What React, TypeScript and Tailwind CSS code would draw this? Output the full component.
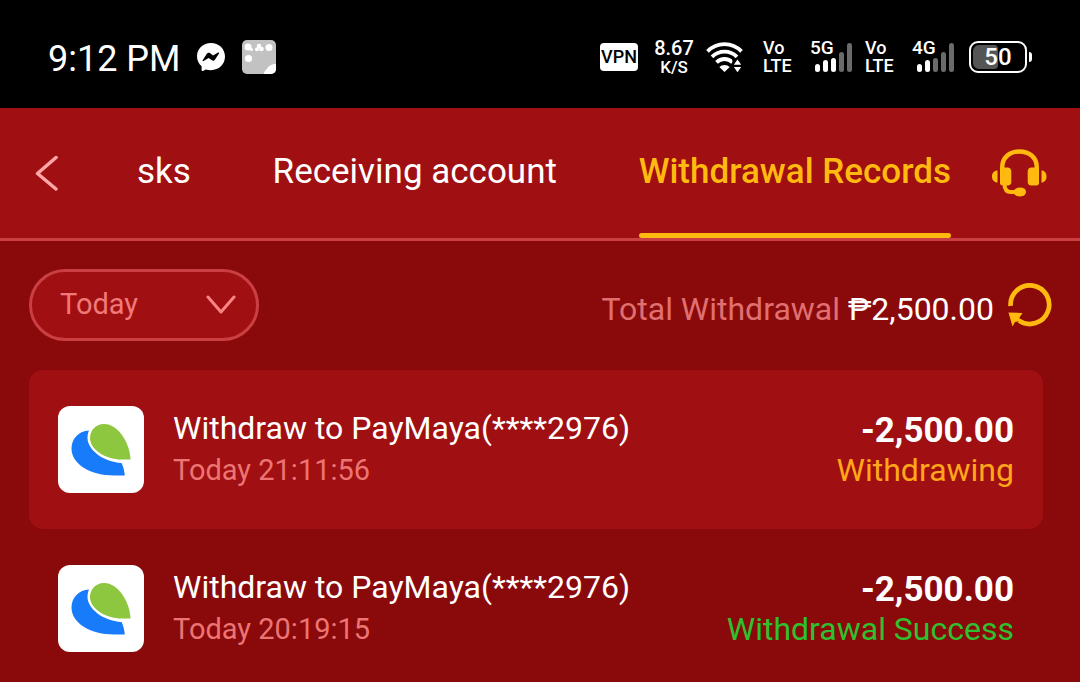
import React from "react";

type WithdrawalRecord = {
  title: string;
  time: string;
  amount: string;
  status: string;
  statusClass: string;
  cardClass: string;
};

const records: WithdrawalRecord[] = [
  {
    title: "Withdraw to PayMaya(****2976)",
    time: "Today 21:11:56",
    amount: "-2,500.00",
    status: "Withdrawing",
    statusClass: "text-[#ffa61a]",
    cardClass: "bg-[#a00f11]",
  },
  {
    title: "Withdraw to PayMaya(****2976)",
    time: "Today 20:19:15",
    amount: "-2,500.00",
    status: "Withdrawal Success",
    statusClass: "text-[#2fc02f]",
    cardClass: "",
  },
];

function MessengerIcon() {
  return (
    <svg className="h-[28px] w-[28px]" viewBox="0 0 28 28" aria-hidden="true">
      <path
        fill="#fff"
        d="M14 0C6.2 0 0 5.7 0 13.3c0 4 1.7 7.500 4.600 9.900V27c0 .8.7 1.200 1.300.9l3-1.400c1.600.5 3.300.7 5.100.7 7.800 0 14-5.700 14-13.600S21.800 0 14 0Z"
      />
      <path
        fill="#000"
        d="m5.700 17.200 4.100-6.500c.7-1 2.100-1.300 3.100-.6l3.200 2.500 5-3c.6-.4 1.300.3.900.9l-4.100 6.200c-.7 1-2 1.300-3 .6l-3.300-2.400-5 3.200c-.6.4-1.300-.3-.9-.9Z"
      />
    </svg>
  );
}

function AppTileIcon() {
  return (
    <svg className="h-[34px] w-[34px]" viewBox="0 0 34 34" aria-hidden="true">
      <clipPath id="tile">
        <rect width="34" height="34" rx="5" />
      </clipPath>
      <g clipPath="url(#tile)">
        <rect width="34" height="34" fill="#c2c2c2" />
        <g fill="#fff">
          <circle cx="6" cy="7" r="3.500" />
          <circle cx="9.500" cy="9.500" r="1.500" />
          <circle cx="17" cy="6" r="2.200" />
          <circle cx="15" cy="9.300" r="2" />
          <circle cx="19.500" cy="9" r="2.300" />
          <circle cx="27" cy="7.500" r="3.500" />
          <circle cx="6.500" cy="18.500" r="3.600" />
          <path d="M22 34c0-2 1-4 3-5 1-3 5-5 9-5v10Z" />
        </g>
      </g>
    </svg>
  );
}

function WifiIcon() {
  return (
    <svg className="h-[31px] w-[37px]" viewBox="0 0 37 31" aria-hidden="true">
      <g fill="none" stroke="#fff" strokeWidth="3.800">
        <path d="M1.500 9.300C11-.4 26-.4 35.500 9.300" />
        <path d="M6 14.800c7-6.800 18-6.800 25 0" />
        <path d="M10.500 20.300c4.500-4.400 11.500-4.400 16 0" />
      </g>
      <path fill="#fff" d="M13.300 25c3-2.700 7.400-2.700 10.400 0l-5.200 5Z" />
      <path fill="#000" d="M26.300 16.500h10.700v14.500h-10.700Z" />
      <path fill="#fff" d="m31.500 17.500 3.700 5.300h-7.400ZM27.800 25h7.400l-3.700 5.300Z" />
    </svg>
  );
}

function VoLte() {
  return (
    <div className="flex w-[30px] flex-col text-[18px] leading-[18px] font-medium">
      <span>Vo</span>
      <span>LTE</span>
    </div>
  );
}

function Signal({ label, level }: { label: string; level: number }) {
  const tops = [24, 20, 18, 12, 3];
  return (
    <div className="relative h-[34px] w-[43px]">
      <svg className="h-full w-full" viewBox="0 0 43 34" aria-hidden="true">
        {tops.map((top, i) => (
          <rect
            key={top}
            x={5 + i * 8}
            y={top}
            width="5"
            height={32 - top}
            rx="2.500"
            fill={i < level ? "#fff" : "#6b6b6b"}
          />
        ))}
      </svg>
      <span className="absolute top-0 left-0 text-[19px] leading-[16px] font-medium">
        {label}
      </span>
    </div>
  );
}

function Battery() {
  return (
    <div className="flex items-center gap-0.5">
      <div className="relative flex h-8 w-[58px] items-center justify-center rounded-[9px] border-2 border-white">
        <span className="absolute inset-y-0.5 left-0.5 w-[25px] rounded-l-[6px] rounded-r-sm bg-[#555]" />
        <span className="relative text-[24px] leading-none font-medium">50</span>
      </div>
      <span className="h-[10px] w-[3px] rounded-r-sm bg-white" />
    </div>
  );
}

function StatusBar() {
  return (
    <header className="flex h-[108px] items-center justify-between bg-black px-12 pt-1 text-white">
      <div className="flex items-center pt-0.5">
        <span className="pt-1 text-[36px] leading-[44px]">9:12 PM</span>
        <span className="ml-4">
          <MessengerIcon />
        </span>
        <span className="ml-[17px]">
          <AppTileIcon />
        </span>
      </div>
      <div className="flex items-center pt-0.5">
        <span className="flex h-7 w-[38px] items-center justify-center rounded-[4px] bg-white text-[18px] leading-none font-medium text-black">
          VPN
        </span>
        <div className="ml-4 flex w-10 flex-col items-center">
          <span className="text-[20px] leading-[20px] font-medium">8.67</span>
          <span className="text-[17px] leading-[18px] font-medium">K/S</span>
        </div>
        <span className="ml-3">
          <WifiIcon />
        </span>
        <span className="ml-5">
          <VoLte />
        </span>
        <span className="ml-[17px]">
          <Signal label="5G" level={3} />
        </span>
        <span className="ml-3">
          <VoLte />
        </span>
        <span className="ml-[17px]">
          <Signal label="4G" level={2} />
        </span>
        <span className="ml-[14px]">
          <Battery />
        </span>
      </div>
    </header>
  );
}

function HeadsetIcon() {
  return (
    <svg className="h-[48px] w-[55px]" viewBox="0 0 55 48" aria-hidden="true">
      <g fill="#ffb90f">
        <path d="M5.500 21.500v12C2.200 33.500 0 31 0 27.500s2.200-6 5.500-6ZM49.500 21.500v12c3 0 5-2.500 5-6s-2-6-5-6Z" />
        <path d="M8 18.500h7.500c2.200 0 3.800 1.600 3.800 3.800V33c0 2-1.300 3.500-3.300 3.500h-5.500c-1.500 0-2.500-1-2.500-2.500ZM47 18.500h-7.500c-2.200 0-3.800 1.600-3.800 3.800V33c0 2 1.300 3.500 3.300 3.500h5.500c1.500 0 2.500-1 2.500-2.500Z" />
        <path d="M22 41.500c1-2 3-3 6-3 4 0 6 1.700 6 4.300S32 47.500 28 47.500c-3 0-5-1-6-3Z" />
      </g>
      <path
        d="M10.200 21v-2.500C10.200 8.500 17.500 2.500 27.500 2.500S44.800 8.500 44.800 18.500V21"
        fill="none"
        stroke="#ffb90f"
        strokeWidth="4.500"
      />
      <path d="M12.500 35c0 5.500 2 8 6.500 8h6" fill="none" stroke="#ffb90f" strokeWidth="4" />
    </svg>
  );
}

function RefreshIcon() {
  return (
    <svg className="h-[44px] w-[44px]" viewBox="0 0 44 44" aria-hidden="true">
      <path
        d="M2.600 23A19.300 19.300 0 1 1 11 37.600"
        fill="none"
        stroke="#ffb90f"
        strokeWidth="4.700"
      />
      <path d="M.5 29.500 14.500 30 11.500 34.500 12.500 38 7 39 4.500 43.500Z" fill="#ffb90f" />
    </svg>
  );
}

function PayMayaLogo() {
  return (
    <div className="h-[87px] w-[86px] shrink-0 overflow-hidden rounded-[12px] bg-white">
      <svg className="h-full w-full" viewBox="0 0 86 86" role="img" aria-label="PayMaya">
        <path
          fill="#187bfa"
          d="M31 24C21 24.500 13.500 32 13.500 42 13.500 58 33 69 56 69H66.800C66.500 65 65.300 60 63.500 56.500 45 55.500 29.500 43 29.500 31.500 29.500 28.500 30 26.500 31 24Z"
        />
        <path
          fill="#8dc63f"
          d="M46 17.500C37.500 17.500 32 24 32 31.500 32 43 47 53 64 53H72.500C72 37 60.500 17.500 46 17.500Z"
        />
      </svg>
    </div>
  );
}

function Tabs() {
  return (
    <nav className="flex h-[133px] items-stretch border-b-3 border-[#ca3f42] bg-[#a00f11] pr-[33px] pl-[35px] text-[35px] leading-[42px] text-white">
      <button type="button" aria-label="Back" className="self-center">
        <svg className="h-[36px] w-[23px]" viewBox="0 0 23 36" aria-hidden="true">
          <path
            d="M21 2.500 2.500 18.500 21 34"
            fill="none"
            stroke="#ffa6a6"
            strokeWidth="3.500"
            strokeLinecap="round"
            strokeLinejoin="round"
          />
        </svg>
      </button>
      <div className="ml-[79px] flex min-w-0 flex-1 justify-between whitespace-nowrap">
        <a href="#tasks" className="flex items-center pb-0.5">
          sks
        </a>
        <a href="#account" className="flex items-center pb-0.5">
          Receiving account
        </a>
        <a
          href="#records"
          aria-current="page"
          className="flex flex-col font-medium text-[#ffb90f]"
        >
          <span className="flex flex-1 items-center pt-[3px]">Withdrawal Records</span>
          <span className="h-[5px] rounded-full bg-[#ffb90f]" />
        </a>
      </div>
      <button type="button" aria-label="Customer service" className="ml-[41px] self-center">
        <HeadsetIcon />
      </button>
    </nav>
  );
}

function Filters() {
  return (
    <div className="flex items-center justify-between pr-7">
      <div className="relative">
        <select
          aria-label="Period"
          defaultValue="Today"
          className="h-[72px] w-[230px] appearance-none rounded-full border-3 border-[#ca3f42] bg-[#a00f11] pl-7 text-[29px] text-[#f07a78]"
        >
          <option>Today</option>
        </select>
        <svg
          className="pointer-events-none absolute top-[26px] right-[23px] h-5 w-[30px]"
          viewBox="0 0 30 20"
          aria-hidden="true"
        >
          <path
            d="M2 2 15 17 28 2"
            fill="none"
            stroke="#f98584"
            strokeWidth="3"
            strokeLinecap="round"
            strokeLinejoin="round"
          />
        </svg>
      </div>
      <div className="flex items-center">
        <p className="pt-2 text-[32px] leading-10 text-[#e07070]">
          Total Withdrawal <span className="text-white">₱2,500.00</span>
        </p>
        <button type="button" aria-label="Refresh" className="ml-[14px]">
          <RefreshIcon />
        </button>
      </div>
    </div>
  );
}

function RecordRow({ record }: { record: WithdrawalRecord }) {
  return (
    <li className={"flex items-center rounded-[14px] px-[29px] py-9 " + record.cardClass}>
      <PayMayaLogo />
      <div className="ml-[29px] flex-1">
        <p className="text-[32px] leading-[42px] text-white">{record.title}</p>
        <p className="text-[29px] leading-[43px] text-[#ec7574]">{record.time}</p>
      </div>
      <div className="text-right">
        <p className="text-[35px] leading-[40px] font-bold text-white">{record.amount}</p>
        <p className={"text-[32px] leading-[38px] " + record.statusClass}>{record.status}</p>
      </div>
    </li>
  );
}

export default function App() {
  return (
    <div className="min-h-screen bg-[#8a090b] font-['Roboto',sans-serif]">
      <StatusBar />
      <Tabs />
      <main className="pt-7 pl-[29px]">
        <Filters />
        <ul className="mt-[29px] mr-[37px]">
          {records.map((record) => (
            <RecordRow key={record.time} record={record} />
          ))}
        </ul>
      </main>
    </div>
  );
}
